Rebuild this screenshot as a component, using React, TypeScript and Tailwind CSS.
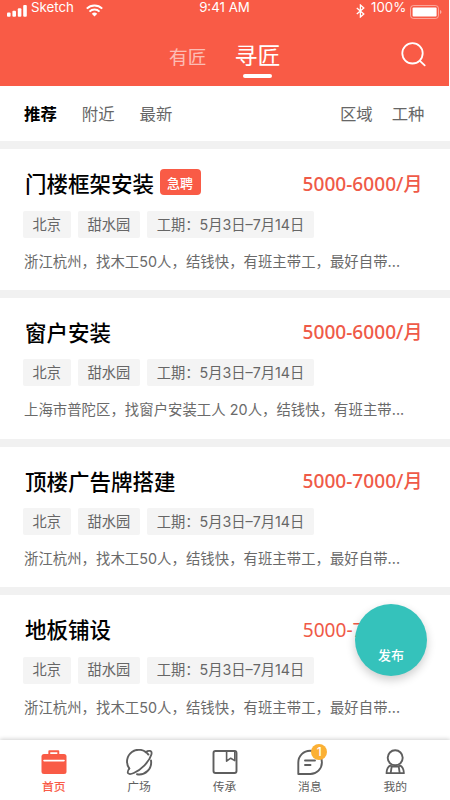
import { useState, type ReactNode } from 'react';
import { clsx } from 'clsx';

interface Job {
  id: number;
  title: string;
  urgent?: boolean;
  salary: string;
  tags: string[];
  description: string;
  light?: boolean;
}

const jobs: Job[] = [
  {
    id: 1,
    title: '门楼框架安装',
    urgent: true,
    salary: '5000-6000/月',
    tags: ['北京', '甜水园', '工期：5月3日–7月14日'],
    description: '浙江杭州，找木工50人，结钱快，有班主带工，最好自带...'
  },
  {
    id: 2,
    title: '窗户安装',
    salary: '5000-6000/月',
    tags: ['北京', '甜水园', '工期：5月3日–7月14日'],
    description: '上海市普陀区，找窗户安装工人 20人，结钱快，有班主带...'
  },
  {
    id: 3,
    title: '顶楼广告牌搭建',
    salary: '5000-7000/月',
    tags: ['北京', '甜水园', '工期：5月3日–7月14日'],
    description: '浙江杭州，找木工50人，结钱快，有班主带工，最好自带...'
  },
  {
    id: 4,
    title: '地板铺设',
    salary: '5000-7000/月',
    tags: ['北京', '甜水园', '工期：5月3日–7月14日'],
    description: '浙江杭州，找木工50人，结钱快，有班主带工，最好自带...',
    light: true
  }
];

function StatusBar() {
  return (
    <div className="flex h-5 shrink-0 items-start justify-between pl-[7px] pr-[7px] font-['Inter',sans-serif] text-[13.3px] leading-[14px]">
      <div className="flex w-[140px] items-start">
        <svg className="mt-[5px] h-3 w-5" viewBox="0 0 20 12" fill="currentColor">
          <rect x="0" y="7.5" width="3.6" height="4.2" rx="1" />
          <rect x="5.4" y="5.7" width="3.6" height="6" rx="1" />
          <rect x="10.8" y="3.2" width="3.6" height="8.5" rx="1" />
          <rect x="16.2" y="0" width="3.6" height="11.7" rx="1" />
        </svg>
        <span className="ml-1 w-[43px]">Sketch</span>
        <svg className="ml-3 mt-1 h-[13px] w-[17px]" viewBox="0 0 17 13" fill="none" stroke="currentColor" strokeWidth="2">
          <path d="M.8 4.6a11 11 0 0 1 15.4 0M3.5 7.6a7.2 7.2 0 0 1 10 0" />
          <path d="M5.8 9.8a4 4 0 0 1 5.4 0L8.5 12.6Z" fill="currentColor" stroke="none" />
        </svg>
      </div>
      <span>9:41 AM</span>
      <div className="flex w-[140px] items-start justify-end">
        <svg className="mt-1 h-[14px] w-[9px]" viewBox="0 0 9 14" fill="none" stroke="currentColor" strokeWidth="1.3">
          <path d="m.8 4 7 6L4.4 13V1l3.4 3-7 6" />
        </svg>
        <span className="ml-[6px] w-[35px]">100%</span>
        <svg className="ml-[4px] mt-[5px] h-[14px] w-8" viewBox="0 0 32 14" fill="currentColor">
          <rect x=".5" y=".5" width="28" height="13" rx="3" fill="none" stroke="currentColor" opacity=".45" />
          <rect x="2.6" y="2.6" width="24" height="8.8" rx="1" />
          <path d="M30 5v4q1.5-.7 1.5-2T30 5" opacity=".5" />
        </svg>
      </div>
    </div>
  );
}

function Header() {
  return (
    <header className="flex h-[86px] w-[449px] shrink-0 flex-col bg-[#f95b46] text-white">
      <StatusBar />
      <div className="flex flex-1 items-start pl-[169px] pr-[23px]">
        <span className="mt-[22px] text-[18.7px] leading-7 opacity-60">有匠</span>
        <div className="ml-[28px] mt-[19px] flex flex-col items-center">
          <span className="text-[23px] leading-[30px]">寻匠</span>
          <span className="mt-[5px] h-1 w-[29px] rounded-full bg-white" />
        </div>
        <svg className="ml-auto mt-[22px] h-[25px] w-[25px]" viewBox="0 0 25 25" fill="none" stroke="currentColor" strokeWidth="1.8" strokeLinecap="round">
          <circle cx="11.5" cy="11.3" r="10.2" />
          <path d="m18.9 18.8 4.8 4.6" />
        </svg>
      </div>
    </header>
  );
}

function FilterBar() {
  const [active, setActive] = useState('推荐');

  return (
    <div className="flex h-[55.4px] shrink-0 items-center pl-6 pr-[25.5px] text-[16.4px] text-[#666]">
      <div className="flex gap-[25px]">
        {['推荐', '附近', '最新'].map((name) => (
          <button
            key={name}
            onClick={() => setActive(name)}
            className={clsx(active === name ? 'font-bold text-black' : 'font-normal')}
          >
            {name}
          </button>
        ))}
      </div>
      <div className="ml-auto flex gap-[19px]">
        <button>区域</button>
        <button>工种</button>
      </div>
    </div>
  );
}

function JobCard({ job }: { job: Job }) {
  return (
    <article className="h-[148.6px] shrink-0 border-t-8 border-[#f1f1f1] pl-[23px] pr-[27.5px]">
      <div className="flex h-[61.5px] items-start pt-[19px]">
        <h2 className="ml-[2px] text-[21.5px] font-medium leading-[30px] text-black">{job.title}</h2>
        {job.urgent && (
          <span className="ml-[5.5px] mt-px flex h-[26px] w-[41px] items-center justify-center rounded bg-[#f95b46] text-[13px] font-medium text-white">
            急聘
          </span>
        )}
        <span
          className={clsx(
            "ml-auto mt-[0.5px] font-['Noto_Sans','Noto_Sans_CJK_SC',sans-serif] text-[19.1px] leading-[30px] text-[#ef5a48]",
            job.light ? 'font-normal' : 'font-medium'
          )}
        >
          {job.salary}
        </span>
      </div>
      <div className="flex gap-[7.3px] font-['Inter','Noto_Sans_CJK_SC',sans-serif]">
        {job.tags.map((tag) => (
          <span key={tag} className="flex h-[27px] items-center whitespace-nowrap rounded-xs bg-[#f4f4f4] px-[9.6px] text-[14.25px] text-[#666]">
            {tag}
          </span>
        ))}
      </div>
      <p className="ml-px mt-[13px] whitespace-nowrap font-['Inter','Noto_Sans_CJK_SC',sans-serif] text-[14.35px] leading-[22px] tracking-[0.06px] text-[#6a6a6a]">
        {job.description}
      </p>
    </article>
  );
}

interface NavItemProps {
  label: string;
  active?: boolean;
  badge?: number;
  children: ReactNode;
}

function NavItem({ label, active, badge, children }: NavItemProps) {
  return (
    <button className={clsx('flex flex-1 flex-col items-center pt-[9px]', active ? 'text-[#f95b46]' : 'text-[#5e5e5e]')}>
      <span className="relative">
        <svg className="h-[27px] w-7" viewBox="0 0 28 27" fill="none" stroke="currentColor" strokeWidth="1.9" strokeLinejoin="round" strokeLinecap="round">
          {children}
        </svg>
        {badge && (
          <span className="absolute -right-[3px] -top-[5px] flex h-[15.5px] w-[15.5px] items-center justify-center rounded-full bg-[#fbb034] font-['Inter',sans-serif] text-[12px] font-medium leading-none text-white">
            {badge}
          </span>
        )}
      </span>
      <span className={clsx('mt-px text-[11.8px] leading-[18px]', active && 'font-medium')}>{label}</span>
    </button>
  );
}

function BottomNav() {
  return (
    <nav className="z-10 flex h-[60px] shrink-0 bg-white pl-[11px] pr-[12px] shadow-[0_-1px_4px_rgba(0,0,0,0.18)]">
      <NavItem label="首页" active>
        <path d="M9.3 5.5V2.2h9v3.3" />
        <rect x="1.5" y="5" width="25" height="20" rx="2.5" fill="currentColor" stroke="none" />
        <path d="M4 11.6h20" stroke="white" strokeWidth="1.6" />
      </NavItem>
      <NavItem label="广场">
        <path d="M23.4 5.6A11.6 11.6 0 1 0 4.3 19.5M26 11.5A12 12 0 0 1 12 25.2" />
        <path d="M20.6 3.2C23.4 1.2 27.6 1.2 26.4 5.4C24.3 12.8 16 20.8 8.8 24C3.4 26.3.9 24.4 4.3 19.4" strokeWidth="1.8" />
      </NavItem>
      <NavItem label="传承">
        <rect x="2.5" y="2" width="23" height="22" rx="2" />
        <path d="M15.6 2.2v10l4.1-3 4.1 2.4V2.2" strokeWidth="1.6" />
      </NavItem>
      <NavItem label="消息" badge={1}>
        <path d="M2.3 25V13.5a11.8 11.8 0 0 1 23.6 0A11.5 11.5 0 0 1 14.4 25Z" />
        <path d="M9 11.5h10M9 16h5.5" />
      </NavItem>
      <NavItem label="我的">
        <circle cx="14.2" cy="8.8" r="7.5" />
        <path d="M9.6 16.4C6.8 17.8 5.6 20.4 5.5 24.2h17.4c-.1-3.8-1.3-6.4-4.1-7.8M9.6 16.9q4.6 1.6 9.2 0M10.6 18l-.9 6M17.8 18l.9 6" strokeWidth="1.8" />
      </NavItem>
    </nav>
  );
}

export default function App() {
  return (
    <div className="relative flex h-[800px] w-[450px] flex-col overflow-hidden bg-white font-['Noto_Sans_CJK_SC',sans-serif]">
      <Header />
      <FilterBar />
      <main className="flex min-h-0 flex-1 flex-col overflow-hidden">
        {jobs.map((job) => (
          <JobCard key={job.id} job={job} />
        ))}
      </main>
      <BottomNav />

      {/* Floating publish button */}
      <button className="absolute right-[23px] top-[604px] flex h-[72px] w-[72px] items-end justify-center rounded-full bg-[#35c2bb] pb-[12px] text-[13px] font-medium leading-[19px] text-white shadow-[0_4px_10px_rgba(0,0,0,0.2)]">
        发布
      </button>
    </div>
  );
}
